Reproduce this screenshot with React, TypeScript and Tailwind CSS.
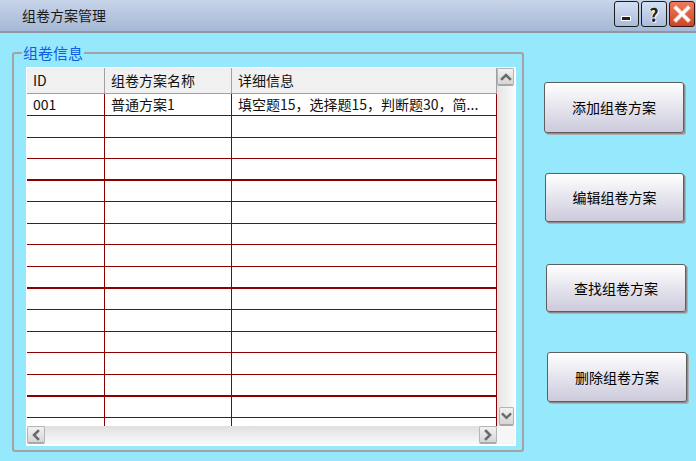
import React from 'react';

const rowHeights = [22, 22, 21, 22, 21, 22, 21, 22, 22, 21, 22, 21, 22, 22, 21];
const thickRows = [3, 8, 13];

const rows = [
  { id: '001', name: '普通方案1', detail: '填空题15，选择题15，判断题30，简...' },
];

function Chevron({ dir }: { dir: 'up' | 'down' | 'left' | 'right' }) {
  const pts = {
    up: '3,9 7,5 11,9',
    down: '3,5 7,9 11,5',
    left: '9,3 5,7 9,11',
    right: '5,3 9,7 5,11',
  }[dir];
  return (
    <svg width="14" height="14" viewBox="0 0 14 14">
      <polyline points={pts} fill="none" stroke="#6b6b6b" strokeWidth="2.6" strokeLinecap="square" />
    </svg>
  );
}

function ScrollBtn({ dir, className = '' }: { dir: 'up' | 'down' | 'left' | 'right'; className?: string }) {
  return (
    <div
      className={`flex items-center justify-center rounded-[2px] border border-[#b4b4b4] border-b-2 border-b-[#a8a8a8] bg-gradient-to-b from-[#f2f2f2] to-[#d6d6d6] ${className}`}
    >
      <Chevron dir={dir} />
    </div>
  );
}

function ActionButton({ label, className = '' }: { label: string; className?: string }) {
  return (
    <button
      className={`flex items-center justify-center rounded-[3px] border border-[#5e5e5e] bg-gradient-to-b from-white to-[#cccadc] text-[14px] text-black shadow-[1px_1px_0_#8c8c8c,2px_2px_0_#b0b0b0] ${className}`}
    >
      {label}
    </button>
  );
}

export default function App() {
  return (
    <div
      className="flex h-[461px] w-[696px] flex-col overflow-hidden bg-[#96e8fc] text-[#111]"
      style={{ fontFamily: '"Noto Sans CJK SC", "Noto Sans", sans-serif' }}
    >
      {/* Title bar */}
      <div className="flex h-[33px] shrink-0 items-start border-b-2 border-[#8e96a2] bg-gradient-to-b from-[#c7d4e9] to-[#a5b8d5]">
        <div className="ml-[22px] mt-[5px] text-[14px] leading-[20px] text-[#1a1a1a]">组卷方案管理</div>
        <div className="ml-auto mr-[1px] mt-[1px] flex gap-[2px]">
          <div className="flex h-[26px] w-[25px] items-end justify-start rounded-[3px] border border-[#1c1c1c] bg-gradient-to-b from-[#d3e0f2] to-[#a8bddc] pb-[5px] pl-[6px]">
            <div className="h-[5px] w-[10px] border border-white bg-[#222]" />
          </div>
          <div className="flex h-[26px] w-[26px] items-center justify-center rounded-[3px] border border-[#1c1c1c] bg-gradient-to-b from-[#d3e0f2] to-[#a8bddc] text-[18px] font-bold leading-none text-[#222] [text-shadow:1px_1px_0_#fff,-1px_0_0_#fff]">
            ?
          </div>
          <div className="flex h-[26px] w-[26px] items-center justify-center rounded-[3px] border border-[#3a1a10] bg-gradient-to-b from-[#ef7a5c] to-[#cf4424]">
            <svg width="18" height="18" viewBox="0 0 18 18">
              <path d="M3 3 L15 15 M15 3 L3 15" stroke="#f4c9be" strokeWidth="4.2" strokeLinecap="square" />
              <path d="M3 3 L15 15 M15 3 L3 15" stroke="#fff" strokeWidth="2.6" strokeLinecap="square" />
            </svg>
          </div>
        </div>
      </div>

      {/* Body */}
      <div className="flex flex-1">
        <fieldset className="ml-[12px] mt-[10px] h-[409px] w-[512px] rounded-[3px] border-2 border-[#a3a3a3] p-0 pb-[5px]">
          <legend className="ml-[8px] px-[1px] text-[15px] leading-[20px] text-[#0c5fe2]">组卷信息</legend>
          <div className="ml-[12px] mt-[4px] h-[379px] w-[490px] bg-white p-px">
            <div className="flex h-[358px]">
              {/* Grid */}
              <div className="flex h-full w-[470px] flex-col overflow-hidden text-[14px]">
                <div className="flex h-[26px] shrink-0 border-b border-[#a0a0a0] bg-[#f0f0f0] leading-[25px]">
                  <div className="w-[78px] border-r border-[#a0a0a0] pl-[6px]">ID</div>
                  <div className="w-[127px] border-r border-[#a0a0a0] pl-[6px]">组卷方案名称</div>
                  <div className="w-[265px] border-r border-[#a0a0a0] pl-[6px]">详细信息</div>
                </div>
                {rowHeights.map((h, i) => {
                  const r = rows[i];
                  const thick = thickRows.includes(i);
                  return (
                    <div
                      key={i}
                      className={`flex shrink-0 border-[#8b0000] ${thick ? 'border-b-2' : 'border-b'}`}
                      style={{ height: h }}
                    >
                      <div className="flex w-[78px] items-center border-r border-[#8b0000] pl-[6px]">{r?.id}</div>
                      <div className="flex w-[127px] items-center border-r border-[#8b0000] pl-[6px]">{r?.name}</div>
                      <div className="flex w-[265px] items-center overflow-hidden whitespace-nowrap border-r border-[#8b0000] pl-[6px]">
                        {r?.detail}
                      </div>
                    </div>
                  );
                })}
                <div className="flex flex-1">
                  <div className="w-[78px] border-r border-[#8b0000]" />
                  <div className="w-[127px] border-r border-[#8b0000]" />
                  <div className="w-[265px] border-r border-[#8b0000]" />
                </div>
              </div>
              {/* Vertical scrollbar */}
              <div className="flex w-[18px] flex-col justify-between bg-gradient-to-r from-[#e4e4e4] to-[#fbfbfb]">
                <ScrollBtn dir="up" className="h-[18px] w-[17px]" />
                <ScrollBtn dir="down" className="mx-auto h-[19px] w-[15px]" />
              </div>
            </div>
            {/* Horizontal scrollbar */}
            <div className="flex h-[18px]">
              <div className="flex w-[470px] justify-between bg-gradient-to-b from-[#e0e0e0] to-[#f9f9f9]">
                <ScrollBtn dir="left" className="h-[18px] w-[18px]" />
                <ScrollBtn dir="right" className="h-[18px] w-[18px]" />
              </div>
              <div className="w-[18px] bg-[#f6f6f6]" />
            </div>
          </div>
        </fieldset>

        {/* Actions */}
        <div className="flex flex-col">
          <ActionButton label="添加组卷方案" className="ml-[20px] mt-[49px] h-[51px] w-[140px]" />
          <ActionButton label="编辑组卷方案" className="ml-[21px] mt-[40px] h-[49px] w-[139px]" />
          <ActionButton label="查找组卷方案" className="ml-[22px] mt-[42px] h-[48px] w-[140px]" />
          <ActionButton label="删除组卷方案" className="ml-[23px] mt-[40px] h-[50px] w-[140px]" />
        </div>
      </div>
    </div>
  );
}
